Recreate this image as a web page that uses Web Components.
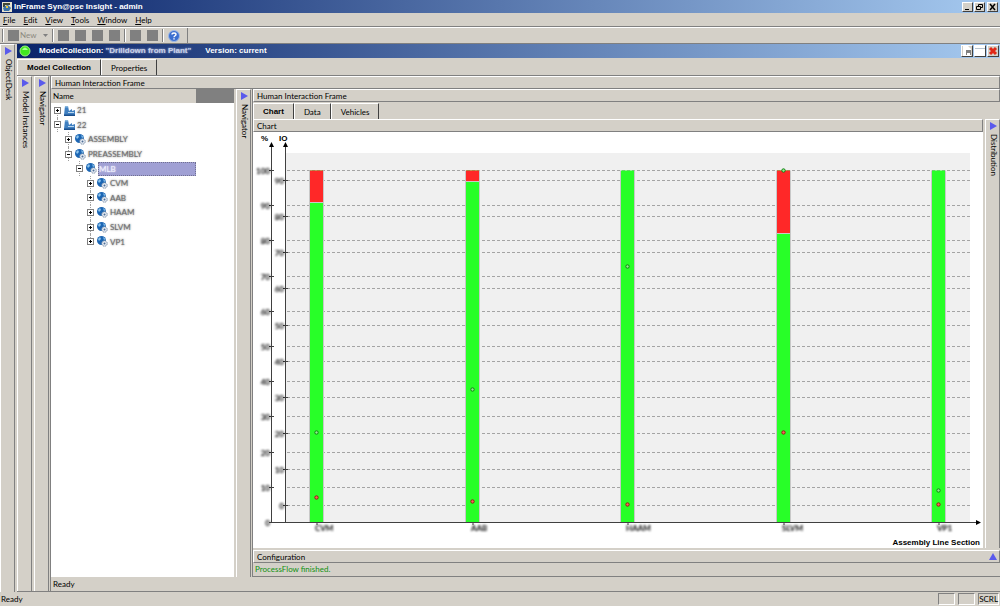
<!DOCTYPE html>
<html lang="en">
<head>
<meta charset="utf-8">
<title>InFrame Syn@pse Insight - admin</title>
<style>
html, body{
    margin: 0;
    height: 100%;
}

body{
    --face: #d4d0c8;
    --shadow: #808080;
    --navy: #0a246a;
    --sky: #a6caf0;
    --plain: Lato, "Liberation Sans", sans-serif;
    --strong: "Liberation Sans", sans-serif;
    background: #d4d0c8;
    color: #000;
    font: 8px/12px var(--plain);
}
</style>
</head>
<body>
<app-window></app-window>

<script>
// small helper: every element clones its template into an open shadow root
function attach(element, html){
    const template = document.createElement("template");
    template.innerHTML = html;
    element.attachShadow({mode: "open"});
    element.shadowRoot.appendChild(template.content.cloneNode(true));
}

class TitleBar extends HTMLElement{
    constructor(){
        super();
        attach(this, `
<style>
:host{
    display: flex;
    align-items: center;
    height: 13px;
    padding: 0 2px;
    gap: 2px;
    color: white;
    font: bold 8px/12px var(--strong);
    background: linear-gradient(to right, var(--navy), var(--sky));
}
:host([child]){
    height: 14px;
    padding: 0 1px 0 2px;
    gap: 8px;
}
span{
    flex: 1;
    display: flex;
}
</style>
<slot name="icon"></slot>
<span><slot></slot></span>
<slot name="buttons"></slot>
`);
    }
}

class MenuBar extends HTMLElement{
    constructor(){
        super();
        attach(this, `
<style>
:host{
    display: block;
    border-bottom: 1px solid var(--shadow);
}
nav{
    display: flex;
    gap: 8px;
    height: 13px;
    padding-left: 3px;
}
button{
    border: 0;
    padding: 0;
    background: none;
    font: inherit;
    color: inherit;
}
</style>
<nav>
    <button><u>F</u>ile</button>
    <button><u>E</u>dit</button>
    <button><u>V</u>iew</button>
    <button><u>T</u>ools</button>
    <button><u>W</u>indow</button>
    <button><u>H</u>elp</button>
</nav>
`);
    }
}

class ToolBar extends HTMLElement{
    constructor(){
        super();
        attach(this, `
<style>
:host{
    display: flex;
    height: 15px;
    border-top: 1px solid white;
    border-bottom: 1px solid var(--shadow);
}
div{
    display: flex;
    align-items: center;
    gap: 6px;
    padding: 0 7px 0 4px;
    border-right: 1px solid var(--shadow);
}
button{
    display: flex;
    align-items: center;
    gap: 1px;
    height: 11px;
    min-width: 11px;
    border: 0;
    padding: 0;
    background: #808080;
    font: inherit;
    line-height: 11px;
    color: #8c8980;
}
button.new{
    background: none;
}
.new i{
    width: 11px;
    height: 11px;
    background: #808080;
}
.new svg{
    margin-left: 6px;
}
.help{
    background: none;
}
hr{
    width: 0;
    height: 13px;
    margin: 0 -2px;
    border: 0;
    border-left: 1px solid var(--shadow);
    border-right: 1px solid white;
}
</style>
<div>
    <hr>
    <button class="new"><i></i>New<svg width="5" height="3"><path d="M0 0h5L2.500 3z" fill="#808080"/></svg></button>
    <hr>
    <button aria-label="Open"></button>
    <button aria-label="Save"></button>
    <button aria-label="Save all"></button>
    <button aria-label="Print"></button>
    <hr>
    <button aria-label="Undo"></button>
    <button aria-label="Redo"></button>
    <hr>
    <button class="help" aria-label="Help">
        <svg width="12" height="12" viewBox="0 0 12 12">
            <circle cx="6" cy="6" r="5.500" fill="#3c6fd0" stroke="#9db8e6"/>
            <path d="M4 4.500C4 2.500 8 2.500 8 4.500C8 5.800 6 5.800 6 7.200M6 8.300V9.600" fill="none" stroke="white" stroke-width="1.400"/>
        </svg>
    </button>
</div>
`);
    }
}

// collapsed pane shown as a vertical strip
class SideStrip extends HTMLElement{
    constructor(){
        super();
        attach(this, `
<style>
:host{
    display: block;
    flex: none;
    width: 13px;
    border: 1px solid white;
    border-right-color: var(--shadow);
    border-bottom: 0;
}
button{
    display: flex;
    flex-direction: column;
    align-items: center;
    gap: 4px;
    width: 100%;
    border: 0;
    padding: 2px 0 0 1px;
    background: none;
    font: inherit;
    color: inherit;
}
span{
    writing-mode: vertical-rl;
    line-height: 11px;
}
</style>
<button>
    <svg width="7" height="8"><path d="M0 0L7 4L0 8z" fill="#5a5aec"/></svg>
    <span><slot></slot></span>
</button>
`);
    }
}

class PaneHeader extends HTMLElement{
    constructor(){
        super();
        attach(this, `
<style>
:host{
    display: flex;
    justify-content: space-between;
    align-items: center;
    height: 11px;
    padding: 0 2px 0 3px;
    border: 1px solid white;
    border-right-color: var(--shadow);
    border-bottom-color: var(--shadow);
}
</style>
<slot></slot>
`);
    }
}

class TabBar extends HTMLElement{
    constructor(){
        super();
        attach(this, `
<style>
:host{
    display: flex;
    height: 16px;
    padding-top: 1px;
}
button{
    border: 0;
    border-top: 1px solid white;
    border-left: 1px solid white;
    border-right: 1px solid #404040;
    padding: 0 9px;
    background: var(--face);
    font: inherit;
    color: inherit;
}
button[aria-selected=true]{
    font: bold 8px/12px var(--strong);
}
</style>
`);
        this.setAttribute("role", "tablist");
        this.getAttribute("tabs").split(",").forEach((name, i) => {
            const button = document.createElement("button");
            button.textContent = name;
            button.setAttribute("role", "tab");
            button.setAttribute("aria-selected", i === 0);
            this.shadowRoot.appendChild(button);
        });
    }
}

// [level, label, open, icon]
const NODES = [
    [0, "21", false, "plant"],
    [0, "22", true, "plant"],
    [1, "ASSEMBLY", false, "gear"],
    [1, "PREASSEMBLY", true, "gear"],
    [2, "MLB", true, "gear"],
    [3, "CVM", false, "gear"],
    [3, "AAB", false, "gear"],
    [3, "HAAM", false, "gear"],
    [3, "SLVM", false, "gear"],
    [3, "VP1", false, "gear"]
];

const ICONS = {
    plant: `<svg width="11" height="11" viewBox="0 0 11 11">
        <path d="M1 1H4L5 6L8 4V6L11 5V10H0z" fill="#3f7fc0"/>
        <path d="M1 1H4V2.500H1z" fill="#84b4dc"/>
        <path d="M4 7H10V8H4z" fill="#b9d6ee"/>
        <path d="M0 9.500H11V11H0z" fill="#1b4f8c"/>
    </svg>`,
    gear: `<svg width="11" height="11" viewBox="0 0 11 11">
        <circle cx="4.500" cy="4.500" r="4.500" fill="#1c66b4"/>
        <path d="M1 3L3 1L4 3L2 5zM6 1L8.500 3L7 4z" fill="#8ec6ee"/>
        <circle cx="7.500" cy="7.500" r="2.700" fill="#e6edf5" stroke="#7c8ea6" stroke-dasharray="1.500 .6"/>
        <circle cx="7.500" cy="7.500" r="1" fill="#4c6c94"/>
    </svg>`
};

class TreeView extends HTMLElement{
    constructor(){
        super();
        attach(this, `
<style>
:host{
    display: flex;
    flex-direction: column;
    flex: none;
    width: 183px;
    background: white;
}
header{
    display: grid;
    grid-template-columns: 145px 1fr;
    height: 14px;
    line-height: 14px;
    background: var(--face);
}
header span{
    padding-left: 2px;
}
header i{
    background: #808080;
}
ul{
    display: grid;
    grid-template-rows: repeat(10, 1fr);
    width: 145px;
    height: 146px;
    margin: 0;
    padding: 0;
    list-style: none;
}
li{
    position: relative;
    display: flex;
    align-items: center;
    padding-left: calc(3px + var(--level) * 11px);
}
/* dotted branch behind the expander */
li::before{
    content: "";
    position: absolute;
    top: 0;
    bottom: 0;
    left: calc(6px + var(--level) * 11px);
    border-left: 1px dotted #a0a0a0;
}
li:first-child::before{
    top: 50%;
}
li:last-child::before{
    bottom: 50%;
}
button{
    position: relative;
    display: flex;
    width: 7px;
    height: 7px;
    margin-right: 3px;
    border: 1px solid #808080;
    padding: 0;
    background: white;
}
li > svg{
    margin-right: 1px;
}
.label{
    padding-left: 1px;
    line-height: 14px;
    color: #707070;
    text-shadow: 0 0 2px #606060;
}
.selected .label{
    flex: 1;
    color: #f0f0ff;
    text-shadow: 0 0 2px white;
    background: #a0a0d4;
    outline: 1px dotted #707090;
    outline-offset: -1px;
}
</style>
<header><span>Name</span><i></i></header>
<ul></ul>
`);
        this.shadowRoot.querySelector("ul").innerHTML = NODES.map(([level, label, open, icon]) => `
    <li style="--level: ${level}"${label === "MLB" ? ' class="selected"' : ""}>
        <button aria-label="${open ? "Collapse" : "Expand"}"><svg width="5" height="5"><path d="M1 2H4V3H1z${open ? "" : "M2 1H3V4H2z"}"/></svg></button>
        ${ICONS[icon]}
        <div class="label">${label}</div>
    </li>`).join("");
    }
}

// red: share of the bar that is red, points are in percent
const BARS = [
    {label: "CVM", red: 9, green: 25.500, bad: 7},
    {label: "AAB", red: 3, green: 37.700, bad: 6},
    {label: "HAAM", red: 0, green: 72.600, bad: 5},
    {label: "SLVM", red: 18, green: 100, bad: 25.500},
    {label: "VP1", red: 0, green: 9, bad: 5}
];

class BarChart extends HTMLElement{
    constructor(){
        super();
        attach(this, `
<style>
:host{
    display: block;
    flex: 1;
    min-height: 0;
    background: white;
}
svg{
    display: block;
    width: 100%;
    height: 100%;
}
text{
    font: 8px var(--plain);
}
.title{
    font: bold 8px var(--strong);
}
.soft{
    font-weight: bold;
    filter: blur(1px);
}
.axis{
    stroke: #404040;
}
.grid{
    stroke: #a4a4a4;
    stroke-dasharray: 3 2;
}
</style>
<svg viewBox="0 0 730 414" preserveAspectRatio="xMinYMin"></svg>
`);
        this.shadowRoot.querySelector("svg").innerHTML = this.draw();
    }

    draw(){
        const bottom = 390;
        const y = value => Math.round(bottom - value * 3.52) + .5;
        let out = `<rect x="33" y="21" width="684" height="369" fill="#f0f0f0"/>`;

        // percent scale
        for(let v = 0; v <= 100; v += 10){
            if(v) out += `<path class="grid" d="M34 ${y(v)}H717"/>`;
            out += `<path class="axis" d="M16 ${y(v)}H21"/>
                <text class="soft" x="17" y="${y(v) + 3}" text-anchor="end">${v}</text>`;
        }

        // IO scale
        for(let v = 0; v <= 90; v += 10){
            const line = Math.round(373 - v * 3.61) + .5;
            out += `<path class="grid" d="M34 ${line}H717"/>
                <path class="axis" d="M30 ${line}H35"/>
                <text class="soft" x="31" y="${line + 3}" text-anchor="end">${v}</text>`;
        }

        BARS.forEach((bar, i) => {
            const x = Math.round(57 + i * 155.6);
            const split = y(100 - bar.red);
            out += `<rect x="${x}" y="${y(100)}" width="13" height="${bottom - y(100)}" fill="#28ff28"/>`;
            if(bar.red){
                out += `<rect x="${x}" y="${y(100)}" width="13" height="${split - y(100)}" fill="#ff2828"/>
                    <path d="M${x} ${split}h13" stroke="#c8c8c8"/>`;
            }
            out += `<path d="M${x - .5} ${y(100)}V${bottom}M${x + 13.5} ${y(100)}V${bottom}" stroke="#c8c8c8"/>
                <circle cx="${x + 6.5}" cy="${y(bar.green)}" r="1.700" fill="#90f090" stroke="#108010"/>
                <circle cx="${x + 6.5}" cy="${y(bar.bad)}" r="1.700" fill="#ff6060" stroke="#902010"/>
                <path class="axis" d="M${x + 7} 390v3"/>
                <text class="soft" x="${x + 5}" y="399">${bar.label}</text>`;
        });

        // axes with arrow heads
        out += `<path class="axis" d="M18.500 13V390.500M32.500 13V390.500M16 390.500H725"/>
            <path d="M18.500 10L21 15H16zM32.500 10L35 15H30zM728 390.500L723 388V393z"/>
            <text class="title" x="8" y="9">%</text>
            <text class="title" x="26" y="9">IO</text>
            <text class="title" x="727" y="413" text-anchor="end">Assembly Line Section</text>`;
        return out;
    }
}

class StatusBar extends HTMLElement{
    constructor(){
        super();
        attach(this, `
<style>
:host{
    display: flex;
    gap: 3px;
    height: 13px;
    padding: 1px 1px 0;
    border-bottom: 1px solid white;
}
span{
    flex: 1;
}
i{
    box-sizing: border-box;
    min-width: 17px;
    height: 12px;
    border: 1px solid white;
    border-top-color: var(--shadow);
    border-left-color: var(--shadow);
    font-style: normal;
    line-height: 11px;
}
</style>
<span>Ready</span>
<i></i><i></i><i>SCRL</i>
`);
    }
}

class AppWindow extends HTMLElement{
    constructor(){
        super();
        attach(this, `
<style>
:host{
    display: flex;
    flex-direction: column;
    min-height: 100vh;
    background: var(--face);
}
.row, .column{
    display: flex;
    flex: 1;
    min-width: 0;
    min-height: 0;
}
.row{
    gap: 2px;
}
.column{
    flex-direction: column;
}
.buttons{
    display: flex;
    gap: 1px;
}
.buttons button{
    display: flex;
    width: 11px;
    height: 10px;
    border: 1px solid white;
    border-right-color: #404040;
    border-bottom-color: #404040;
    padding: 0;
    background: var(--face);
}
.buttons button:last-child{
    margin-left: 1px;
}
.child button, .child button:last-child{
    width: 12px;
    height: 12px;
    margin: 0;
}
.soft{
    margin: 0 14px 0 2px;
    color: #c8d0e8;
    text-shadow: 0 0 2px #c8d0e8;
}
.frame{
    border-top: 1px solid var(--shadow);
}
.ready{
    height: 14px;
    padding-left: 2px;
    line-height: 14px;
}
.bottom{
    border-bottom: 1px solid var(--shadow);
}
.work{
    box-shadow: -1px 0 var(--shadow);
}
.config{
    margin-top: 2px;
}
.message{
    height: 13px;
    padding-left: 2px;
    line-height: 13px;
    border-bottom: 1px solid var(--shadow);
    color: #109010;
}
</style>
<title-bar>
    <svg slot="icon" width="10" height="10" viewBox="0 0 10 10">
        <path d="M0 0H10V10H0z" fill="#e8e4d0"/>
        <path d="M1 1H8V3H3V5H1z" fill="#404838"/>
        <path d="M3 4L6 3L9 6L7 9H2L1 6z" fill="#3c74a8"/>
        <path d="M4 4H6V6H4z" fill="#e8c838"/>
    </svg>
    InFrame Syn@pse Insight - admin
    <div slot="buttons" class="buttons">
        <button aria-label="Minimize"><svg width="9" height="8"><path d="M2 6H6V7H2z"/></svg></button>
        <button aria-label="Restore"><svg width="9" height="8"><path d="M3.500 3V1.500H7.500V4.500H6M1.500 3.500H5.500V6.500H1.500z" fill="none" stroke="black"/></svg></button>
        <button aria-label="Close"><svg width="9" height="8"><path d="M2 1L7 7M7 1L2 7" stroke="black" stroke-width="1.500"/></svg></button>
    </div>
</title-bar>
<menu-bar></menu-bar>
<tool-bar></tool-bar>

<div class="row">
    <side-strip>ObjectDesk</side-strip>
    <div class="column">
        <title-bar child>
            <svg slot="icon" width="12" height="12" viewBox="0 0 12 12">
                <circle cx="6" cy="6" r="5" fill="#40e820" stroke="#a0f080"/>
                <path d="M3 5Q6 0 9 5z" fill="#a8ff90"/>
            </svg>
            ModelCollection: <span class="soft">"Drilldown from Plant"</span> Version: current
            <div slot="buttons" class="buttons child">
                <button aria-label="Save"><svg width="10" height="10"><path d="M1 0H6L9 3V10H1z" fill="white"/><path d="M4 4H9V9H4z" fill="#808080"/><path d="M5 7H8V9H5z" fill="white"/></svg></button>
                <button aria-label="Maximize"><svg width="10" height="10"><path d="M0 0H10V10H0z" fill="white"/><path d="M0 2H10V3H0z" fill="#b8c4d0"/></svg></button>
                <button aria-label="Close"><svg width="10" height="10"><path d="M2 2L8 8M8 2L2 8" stroke="#e02818" stroke-width="3"/></svg></button>
            </div>
        </title-bar>
        <tab-bar tabs="Model Collection,Properties"></tab-bar>
        <div class="row frame">
            <side-strip>Model Instances</side-strip>
            <side-strip>Navigator</side-strip>
            <div class="column work">
                <pane-header>Human Interaction Frame</pane-header>
                <div class="row">
                    <tree-view></tree-view>
                    <side-strip>Navigator</side-strip>
                    <div class="column work">
                        <pane-header>Human Interaction Frame</pane-header>
                        <tab-bar tabs="Chart,Data,Vehicles"></tab-bar>
                        <div class="row">
                            <div class="column">
                                <pane-header>Chart</pane-header>
                                <bar-chart></bar-chart>
                            </div>
                            <side-strip>Distribution</side-strip>
                        </div>
                        <pane-header class="config">Configuration<svg width="8" height="7"><path d="M4 0L8 7H0z" fill="#5a5aec"/></svg></pane-header>
                        <div class="message">ProcessFlow finished.</div>
                    </div>
                </div>
                <div class="ready">Ready</div>
            </div>
        </div>
        <div class="bottom"></div>
    </div>
</div>
<status-bar></status-bar>
`);
    }
}

customElements.define("title-bar", TitleBar);
customElements.define("menu-bar", MenuBar);
customElements.define("tool-bar", ToolBar);
customElements.define("side-strip", SideStrip);
customElements.define("pane-header", PaneHeader);
customElements.define("tab-bar", TabBar);
customElements.define("tree-view", TreeView);
customElements.define("bar-chart", BarChart);
customElements.define("status-bar", StatusBar);
customElements.define("app-window", AppWindow);
</script>
</body>
</html>
